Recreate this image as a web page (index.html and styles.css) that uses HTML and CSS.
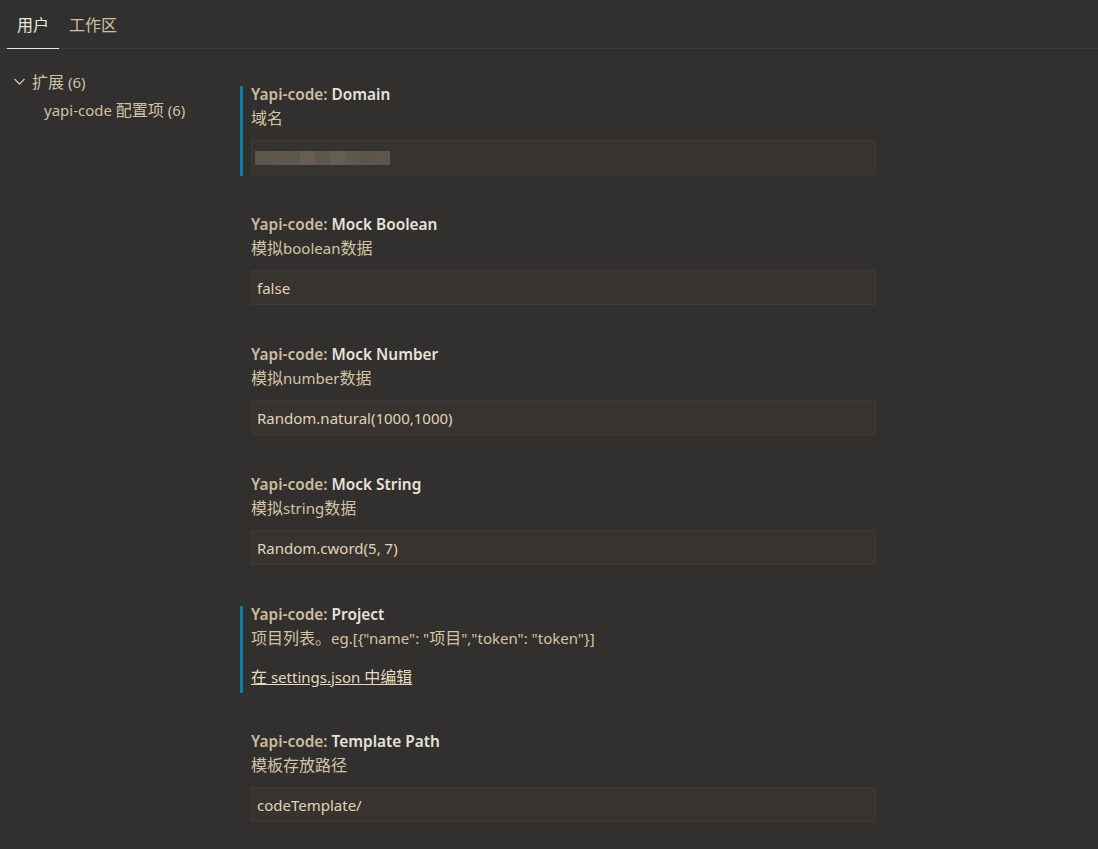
FILE: index.html
```html
<!DOCTYPE html>
<html lang="zh-CN">
<head>
  <meta charset="UTF-8">
  <title>设置</title>
  <link rel="stylesheet" href="styles.css">
</head>
<body>
<div class="tabs">
  <a class="tab active">用户</a>
  <a class="tab">工作区</a>
</div>
<div class="main">
  <div class="toc">
    <div class="toc-item">
      <svg class="chev" width="13" height="13" viewBox="0 0 13 13"><path d="M1.5 4 L6.5 9 L11.5 4" fill="none" stroke="#cfc1a3" stroke-width="1.3"/></svg>
      <span><span class="zh">扩展</span> (6)</span>
    </div>
    <div class="toc-item sub"><span>yapi-code <span class="zh">配置项</span> (6)</span></div>
  </div>
  <div class="list">
    <div class="setting focused">
      <div class="title"><span class="cat">Yapi-code: </span>Domain</div>
      <div class="desc"><span class="zh">域名</span></div>
      <div class="input">
        <div class="blur">
          <i style="background:#5d564d"></i><i style="background:#60584f"></i><i style="background:#5e574e"></i><i style="background:#675d52"></i><i style="background:#5d574e"></i><i style="background:#665d53"></i><i style="background:#5f584f"></i><i style="background:#5c554c"></i><i style="background:#5e564d"></i>
        </div>
      </div>
    </div>
    <div class="setting">
      <div class="title"><span class="cat">Yapi-code: </span>Mock Boolean</div>
      <div class="desc"><span class="zh">模拟</span>boolean<span class="zh">数据</span></div>
      <div class="input">false</div>
    </div>
    <div class="setting">
      <div class="title"><span class="cat">Yapi-code: </span>Mock Number</div>
      <div class="desc"><span class="zh">模拟</span>number<span class="zh">数据</span></div>
      <div class="input">Random.natural(1000,1000)</div>
    </div>
    <div class="setting">
      <div class="title"><span class="cat">Yapi-code: </span>Mock String</div>
      <div class="desc"><span class="zh">模拟</span>string<span class="zh">数据</span></div>
      <div class="input">Random.cword(5, 7)</div>
    </div>
    <div class="setting focused">
      <div class="title"><span class="cat">Yapi-code: </span>Project</div>
      <div class="desc"><span class="zh">项目列表。</span>eg.[{"name": "<span class="zh">项目</span>","token": "token"}]</div>
      <a class="edit-link"><span class="zh">在</span> settings.json <span class="zh">中编辑</span></a>
    </div>
    <div class="setting">
      <div class="title"><span class="cat">Yapi-code: </span>Template Path</div>
      <div class="desc"><span class="zh">模板存放路径</span></div>
      <div class="input">codeTemplate/</div>
    </div>
  </div>
</div>
</body>
</html>
```

FILE: styles.css
```css
html,body{
  margin: 0;
  height: 100%;
  background: #32302e;
  font-family: "Noto Sans", "Noto Sans CJK SC", sans-serif;
  font-size: 15px;
  color: #d3c4a4;
  overflow: hidden;
}
.zh{
  font-size: 16px;
}
.tabs{
  display: flex;
  height: 48px;
  padding-left: 7px;
  border-bottom: 1px solid #3f3c38;
}
.tab{
  display: flex;
  align-items: center;
  padding: 0 10px;
  font-size: 16px;
  color: #cfc1a3;
  border-bottom: 1px solid transparent;
  margin-bottom: -1px;
}
.tab.active{
  color: #e8e6e1;
  border-bottom-color: #e8e6e1;
}
.main{
  display: flex;
}
.toc{
  width: 240px;
  flex: none;
  padding-top: 18px;
}
.toc-item{
  display: flex;
  align-items: center;
  height: 28px;
  padding-left: 13px;
  gap: 6px;
  color: #cfc1a3;
}
.toc-item.sub{
  padding-left: 44px;
}
.list{
  padding-top: 37px;
  width: 636px;
  display: flex;
  flex-direction: column;
  gap: 40px;
}
.setting{
  border-left: 3px solid transparent;
  padding: 0 0 1px 8px;
}
.setting.focused{
  border-left-color: #0d7fa6;
}
.title{
  padding-top: 1px;
  line-height: 16px;
  font-size: 15.4px;
  font-weight: 600;
  color: #e6e2da;
}
.cat{
  color: #cbbc9d;
}
.desc{
  margin-top: 3px;
  height: 24px;
  line-height: 24px;
}
.input{
  margin-top: 10px;
  height: 35px;
  box-sizing: border-box;
  background: #37332f;
  border: 1px solid #3d3935;
  padding: 0 5px;
  display: flex;
  align-items: center;
  color: #e0d3b5;
}
.blur{
  display: flex;
  margin-left: -2px;
}
.blur i{
  width: 15px;
  height: 14px;
}
.edit-link{
  display: block;
  margin-top: 15px;
  height: 24px;
  line-height: 24px;
  color: #e4d9bf;
  text-decoration: underline;
  padding-bottom: 3px;
}
```
